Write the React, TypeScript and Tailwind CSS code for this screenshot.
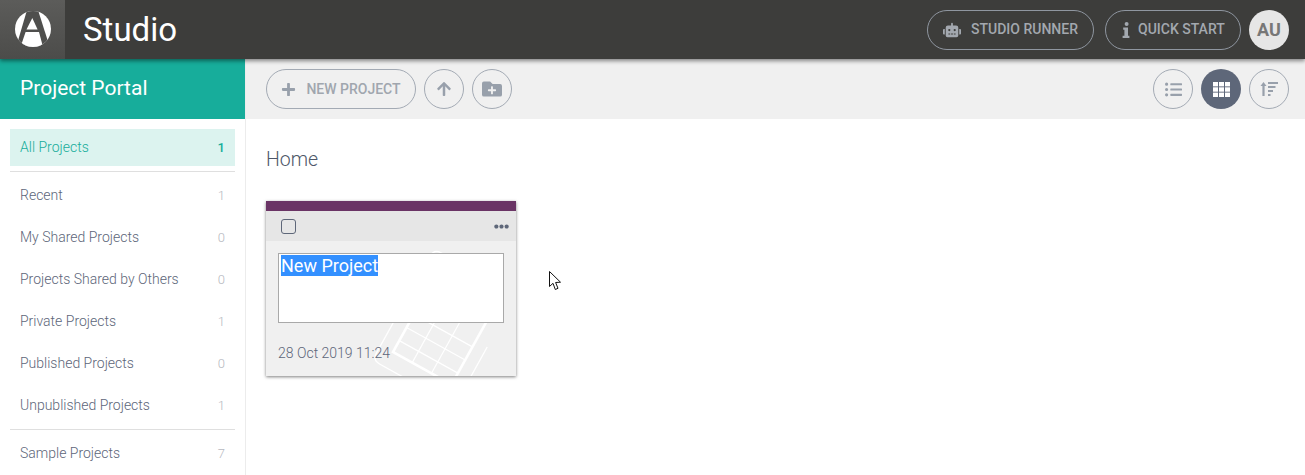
import { FaRobot, FaListUl, FaPlus, FaArrowUp, FaFolderPlus, FaEllipsisH } from "react-icons/fa";

const items: [string, number][] = [
  ["Recent", 1],
  ["My Shared Projects", 0],
  ["Projects Shared by Others", 0],
  ["Private Projects", 1],
  ["Published Projects", 0],
  ["Unpublished Projects", 1],
];

function Row({ label, n }: { label: string; n: number }) {
  return (
    <div className="flex h-[42px] items-center justify-between pl-[10px] pr-[10px] text-[14px] font-light text-[#5d6679]">
      <span>{label}</span>
      <span className="pt-px text-[13px] text-[#b6b9bf]">{n}</span>
    </div>
  );
}

function Circle({ children, active }: { children: React.ReactNode; active?: boolean }) {
  return (
    <button
      className={
        active
          ? "flex h-10 w-10 items-center justify-center rounded-full bg-[#5e6779] text-white"
          : "flex h-10 w-10 items-center justify-center rounded-full border border-[#a3aab4] text-[#98a0ab]"
      }
    >
      {children}
    </button>
  );
}

export default function App() {
  return (
    <div className="flex h-[475px] w-[1305px] flex-col overflow-hidden bg-white font-['Roboto',sans-serif]">
      <header className="relative z-10 flex h-[59px] shrink-0 items-center bg-[#3d3d3b] pr-4 shadow-[0_2px_4px_rgba(0,0,0,0.45)]">
        <div className="flex h-[59px] w-[65px] items-center justify-center bg-gradient-to-b from-[#5c5c5a] to-[#4c4c4a] pb-px">
          <svg width="36" height="36" viewBox="0 0 36 36">
            <defs>
              <clipPath id="logo-circle">
                <circle cx="18" cy="18" r="18" />
              </clipPath>
            </defs>
            <g clipPath="url(#logo-circle)">
              <rect width="36" height="36" fill="#fff" />
              <path d="M12 -1 L23 -1 L36 40 L0 40 Z" fill="#4f4f4d" />
              <path d="M17.3 7 L22.6 18.5 L11.5 18.5 Z" fill="#fff" />
              <path d="M10.6 21 L24 21 L28 36 L5.5 36 Z" fill="#fff" />
            </g>
          </svg>
        </div>
        <span className="ml-[18px] text-[33px] leading-none font-normal text-white">Studio</span>
        <div className="ml-auto flex items-center gap-[11px]">
          <button className="flex h-10 w-[167px] items-center justify-center gap-[10px] rounded-full border border-[#8f96a0] text-[14px] font-medium text-[#a3a8af]">
            <FaRobot size={18} />
            <span>STUDIO RUNNER</span>
          </button>
          <button className="flex h-10 w-[136px] items-center justify-start gap-[8px] rounded-full border border-[#8f96a0] pl-[16px] text-[14px] font-medium text-[#a3a8af]">
            <svg width="8" height="16" viewBox="0 0 8 16" fill="currentColor">
              <circle cx="4.6" cy="2" r="2" />
              <path d="M1.2 5.5 H6 V13.8 H7.4 V16 H.6 V13.8 H2.4 V7.7 H1.2 Z" />
            </svg>
            <span>QUICK START</span>
          </button>
          <div className="-ml-[3px] flex h-10 w-10 items-center justify-center rounded-full bg-[#e6e6e6] text-[18px] font-bold text-[#777]">
            AU
          </div>
        </div>
      </header>
      <div className="flex min-h-0 flex-1">
        <aside className="w-[246px] shrink-0 border-r border-[#ececec]">
          <div className="flex h-[60px] items-center bg-[#17ad9b] pb-[2px] pl-5 text-[21px] leading-none font-normal text-white">
            Project Portal
          </div>
          <div className="px-[10px] pt-[10px]">
            <div className="flex h-[37px] items-center justify-between bg-[#dcf3ef] px-[10px] text-[14px] font-light text-[#17ad9b]">
              <span>All Projects</span>
              <span className="text-[13px] font-medium">1</span>
            </div>
            <div className="mt-[5px] mb-[2px] border-t border-[#dfdfdf]" />
            {items.map(([l, n]) => (
              <Row key={l} label={l} n={n} />
            ))}
            <div className="mt-[3px] mb-[2px] border-t border-[#dfdfdf]" />
            <Row label="Sample Projects" n={7} />
          </div>
        </aside>
        <main className="min-w-0 flex-1">
          <div className="flex h-[60px] items-center gap-2 bg-[#f0f0f0] pr-4 pl-5">
            <button className="flex h-10 w-[150px] items-center justify-center gap-[10px] rounded-full border border-[#a3aab4] text-[14px] font-medium text-[#a0a6ae]">
              <FaPlus size={15} className="text-[#98a0ab]" />
              <span className="pt-px">NEW PROJECT</span>
            </button>
            <Circle>
              <FaArrowUp size={16} />
            </Circle>
            <Circle>
              <FaFolderPlus size={20} />
            </Circle>
            <div className="ml-auto flex items-center gap-2">
              <Circle>
                <FaListUl size={17} />
              </Circle>
              <Circle active>
                <svg width="17" height="15" viewBox="0 0 17 15" fill="currentColor">
                  <rect x="0" y="0" width="5" height="4.4" />
                  <rect x="6" y="0" width="5" height="4.4" />
                  <rect x="12" y="0" width="5" height="4.4" />
                  <rect x="0" y="5.3" width="5" height="4.4" />
                  <rect x="6" y="5.3" width="5" height="4.4" />
                  <rect x="12" y="5.3" width="5" height="4.4" />
                  <rect x="0" y="10.6" width="5" height="4.4" />
                  <rect x="6" y="10.6" width="5" height="4.4" />
                  <rect x="12" y="10.6" width="5" height="4.4" />
                </svg>
              </Circle>
              <Circle>
                <svg width="18" height="18" viewBox="0 0 18 18" fill="currentColor">
                  <path d="M3.5 2 L6.5 6 H4.6 V16 H2.4 V6 H.5 Z" />
                  <rect x="8" y="2" width="10" height="2" />
                  <rect x="8" y="6" width="7.5" height="2" />
                  <rect x="8" y="10" width="5" height="2" />
                  <rect x="8" y="14" width="2.5" height="2" />
                </svg>
              </Circle>
            </div>
          </div>
          <div className="relative px-5">
            <h2 className="pt-[29px] text-[19.5px] leading-[24px] font-light text-[#4e5769]">Home</h2>
            <div className="relative mt-[29px] h-[175px] w-[250px] overflow-hidden bg-[#f0f0f0] shadow-[0_1px_3px_rgba(0,0,0,0.5)]">
              <svg className="absolute top-0 left-0" width="250" height="175" viewBox="0 0 250 175" fill="none" stroke="#fff">
                <g transform="translate(127 151) rotate(29)">
                  <path d="M20 -110 H-6 Q-14 -110 -14 -102 V9 Q-14 17 -6 17 H72 Q80 17 80 9 V-50" strokeWidth="1.3" />
                  <rect x="0" y="-95" width="67" height="95" strokeWidth="2.6" />
                  <path d="M0 -13 H67 M0 -28 H67 M0 -43 H67 M22 0 V-95 M44 0 V-95" strokeWidth="1.2" />
                </g>
              </svg>
              <div className="relative h-[10px] bg-[#6a3465]" />
              <div className="relative flex h-[30px] items-center justify-between bg-[#e6e6e6] pr-[7px] pl-[15px]">
                <div className="h-[15px] w-[15px] rounded-[3px] border border-[#5e6779]" />
                <FaEllipsisH size={15} className="text-[#5e6779]" />
              </div>
              <div className="relative px-3 pt-3">
                <div className="h-[70px] w-[226px] border border-[#a9a9a9] bg-white pt-[1px] pl-[2px] text-[18px] leading-[22px] text-white">
                  <span className="bg-[#3390ff]">New Project</span>
                </div>
                <div className="pt-[21px] text-[14px] leading-[18px] font-light text-[#5d6679]">28 Oct 2019 11:24</div>
              </div>
            </div>
            <svg className="absolute top-[152px] left-[303px]" width="13" height="20" viewBox="0 0 13 20">
              <path d="M.5 .5 V15.5 L4 12.3 L6.3 18.5 L9 17.3 L6.6 11.5 L11.5 11.2 Z" fill="#fff" stroke="#111" strokeWidth="1" />
            </svg>
          </div>
        </main>
      </div>
    </div>
  );
}
